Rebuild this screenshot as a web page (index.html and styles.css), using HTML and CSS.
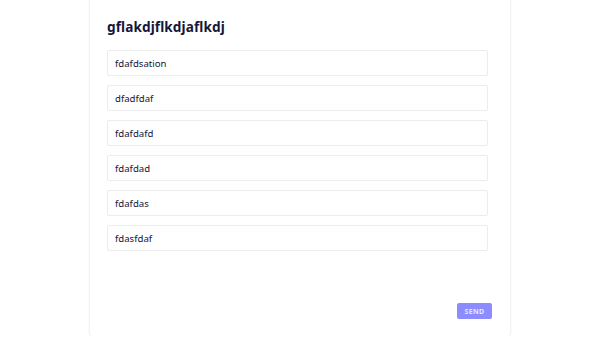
FILE: index.html
```html
<!DOCTYPE html>
<html lang="en">
<head>
    <meta charset="UTF-8">
    <meta name="viewport" content="width=device-width, initial-scale=1.0">
    <title>Form</title>
    <link rel="stylesheet" href="styles.css">
</head>
<body>
    <div class="card">
        <h1 class="title">gflakdjflkdjaflkdj</h1>

        <form class="fields">
            <input type="text" class="field" value="fdafdsation">
            <input type="text" class="field" value="dfadfdaf">
            <input type="text" class="field" value="fdafdafd">
            <input type="text" class="field" value="fdafdad">
            <input type="text" class="field" value="fdafdas">
            <input type="text" class="field" value="fdasfdaf">
        </form>

        <div class="actions">
            <button type="button" class="send">SEND</button>
        </div>
    </div>
</body>
</html>
```

FILE: styles.css
```css
body {
    margin: 0;
    background-color: #ffffff;
    font-family: "Noto Sans", sans-serif;
    color: #14163a;
}
.card {
    width: 420px;
    height: 346px;
    margin: -10px auto 0;
    box-sizing: border-box;
    padding: 28px 22px 17px 17px;
    border-radius: 3px;
    background-color: #ffffff;
    box-shadow: 0 0 3px rgba(0, 0, 0, 0.14);
    display: flex;
    flex-direction: column;
}
.title {
    margin: 0 0 15px;
    font-size: 13.6px;
    line-height: 17px;
    font-weight: 700;
    color: #14163a;
    letter-spacing: 0.1px;
}
.fields {
    display: flex;
    flex-direction: column;
    gap: 9px;
}
.field {
    height: 26px;
    box-sizing: border-box;
    padding: 0 7px;
    border: 1px solid #ececec;
    border-radius: 2px;
    font-family: "Noto Sans", sans-serif;
    font-size: 9.6px;
    color: #14163a;
    outline: none;
}
.actions {
    margin-top: auto;
    display: flex;
    justify-content: flex-end;
    margin-right: -4px;
}
.send {
    width: 35px;
    height: 16px;
    padding: 0;
    border: none;
    border-radius: 2px;
    background-color: #8c8cff;
    color: #e6e6ff;
    font-family: "Noto Sans", sans-serif;
    font-size: 7px;
    font-weight: 700;
    letter-spacing: 0.3px;
}
```
